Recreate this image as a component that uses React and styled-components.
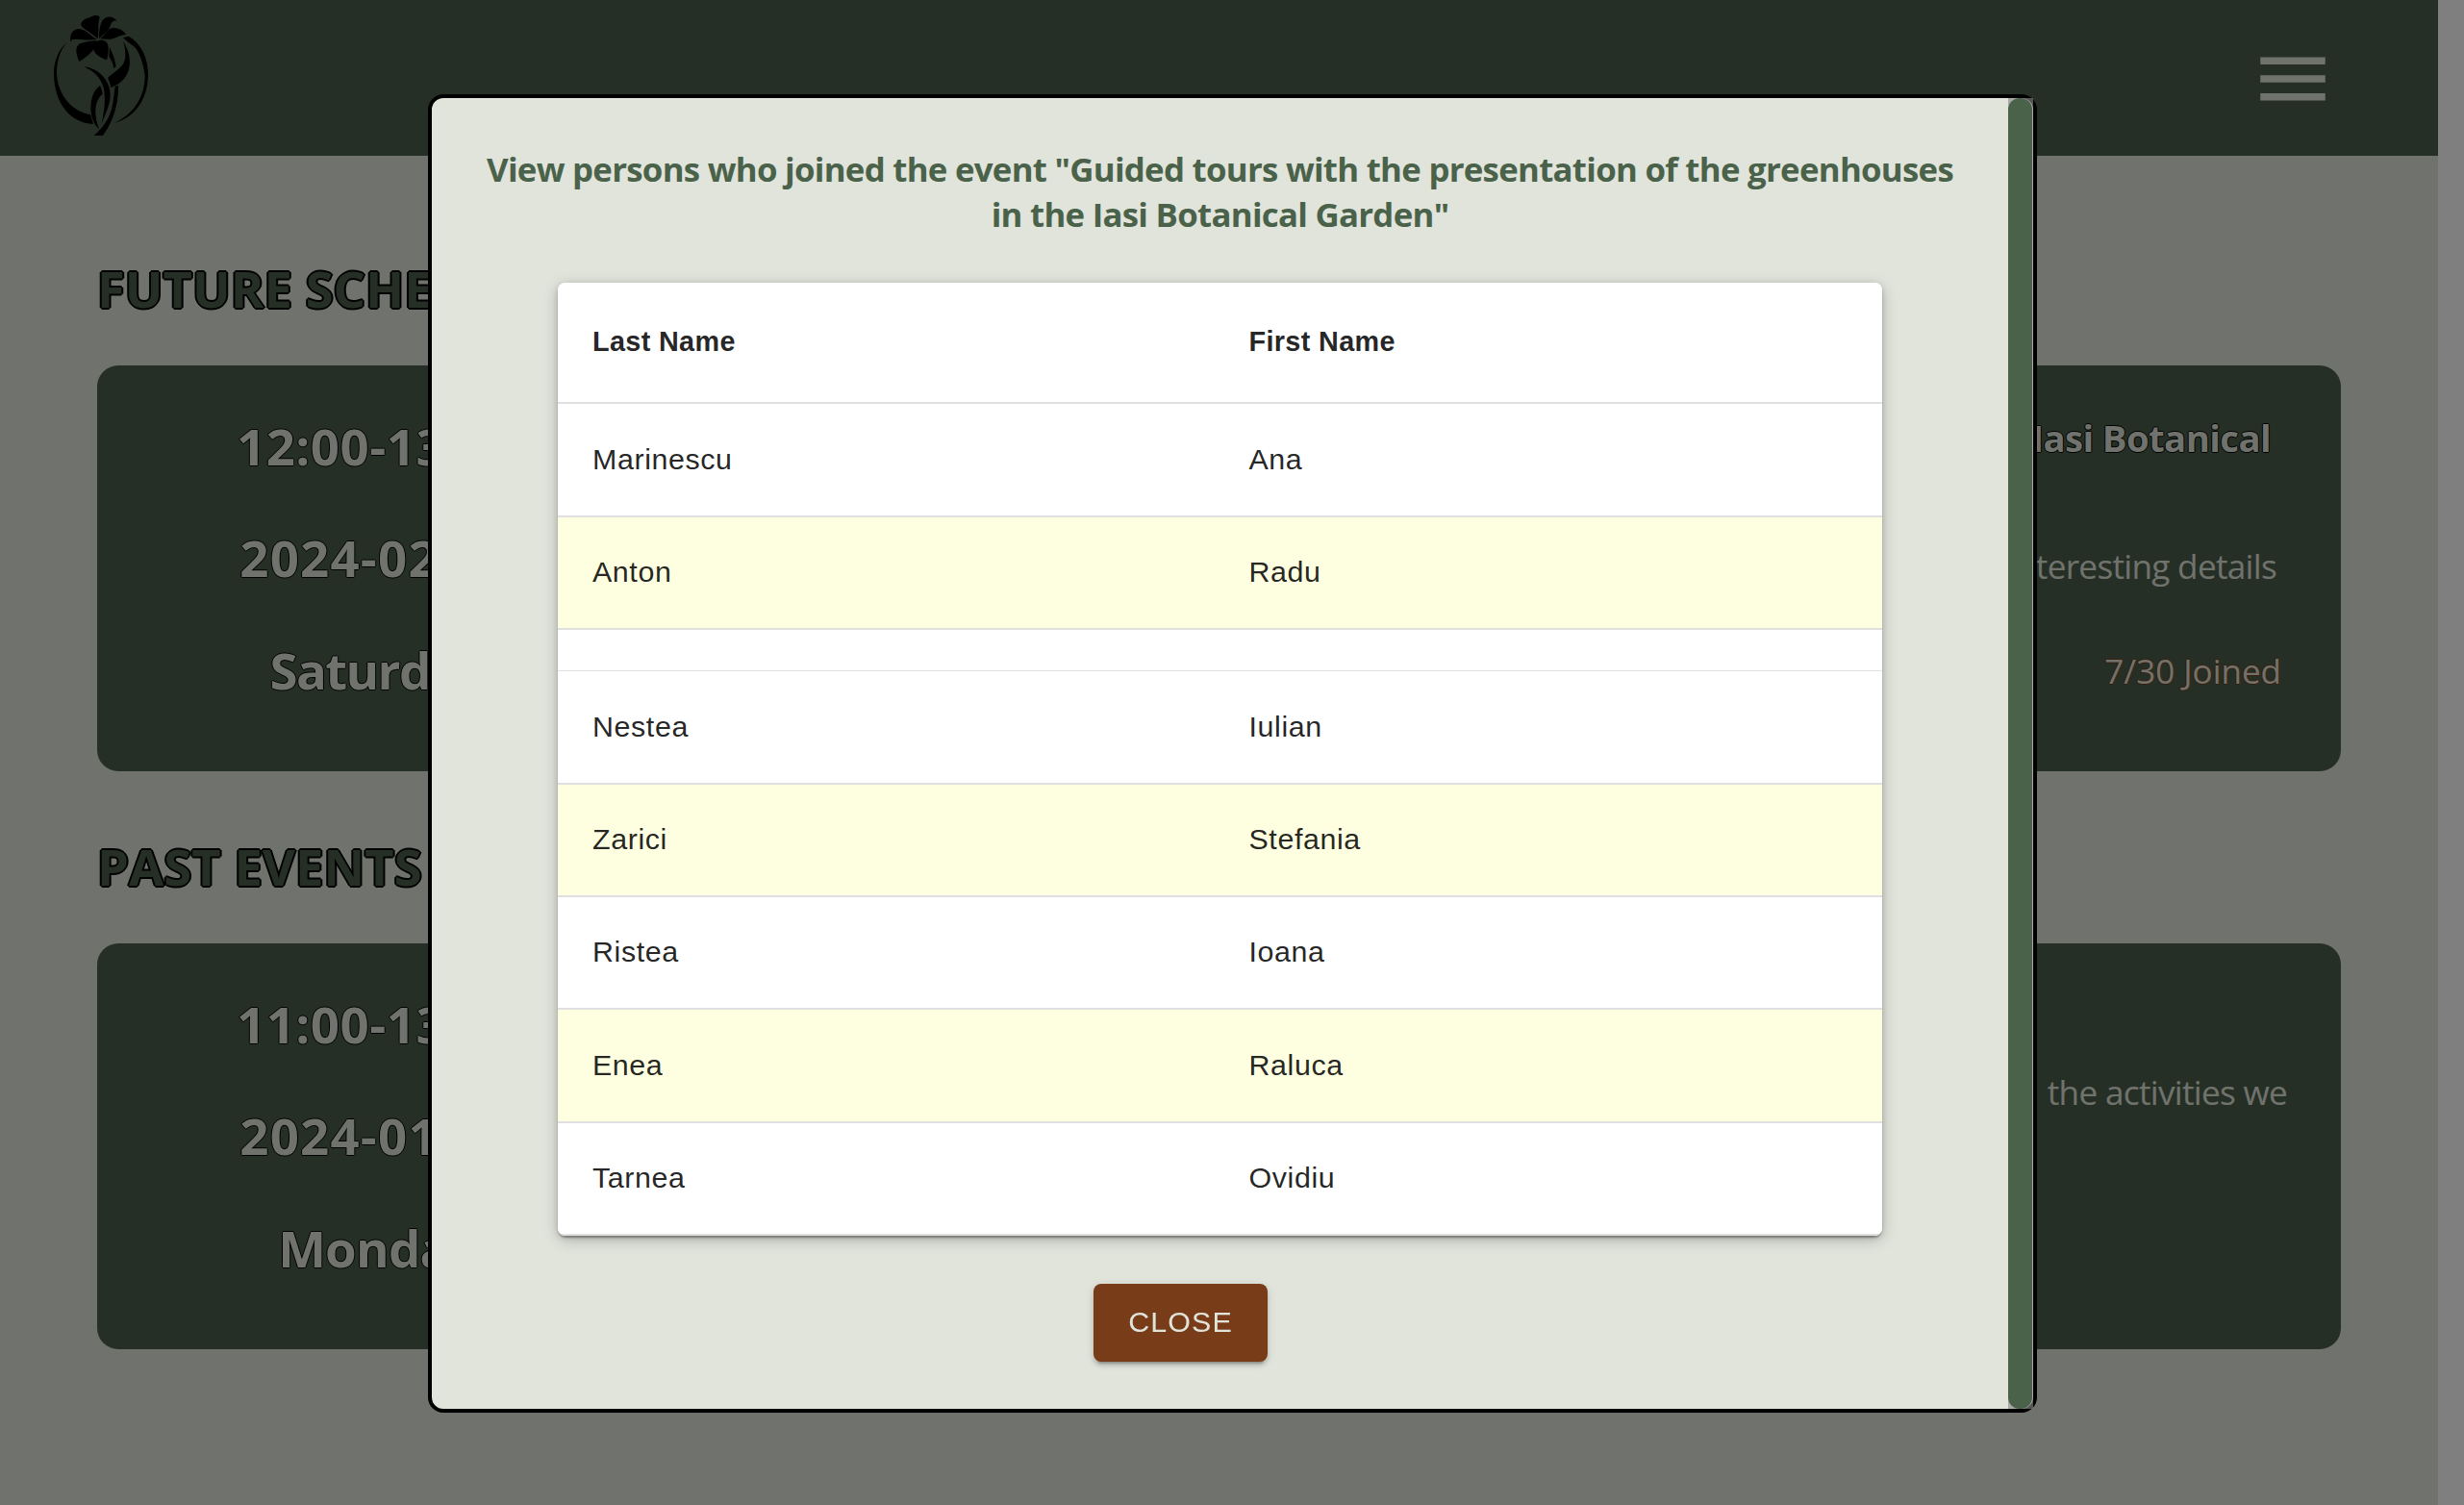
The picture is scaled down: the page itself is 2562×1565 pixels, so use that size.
import React from 'react';
import styled, { createGlobalStyle } from 'styled-components';

const UI_FONT = '"Segoe UI", "Open Sans", "Noto Sans", sans-serif';
const TABLE_FONT = 'Arial, "Liberation Sans", sans-serif';

const GlobalStyle = createGlobalStyle`
  *, *::before, *::after { box-sizing: border-box; }
  html, body { margin: 0; padding: 0; }
  body { height: 1565px; overflow: hidden; background: #e1e4db; font-family: ${UI_FONT}; }
  h1, h2, h3, p { margin: 0; }
`;

const Shell = styled.div`
  display: grid;
  grid-template-columns: 1fr 27px;
  height: 1565px;
`;

const Page = styled.div`
  background: #e1e4db;
  overflow: hidden;
`;

const ScrollGutter = styled.div`
  background: #ffffff;
`;

const Header = styled.header`
  display: flex;
  justify-content: space-between;
  height: 162px;
  padding: 0 106px 0 30px;
  background: #4a5f4a;
`;

const Logo = styled.svg`
  width: 150px;
  height: 160px;
  fill: #000;
`;

const MenuIcon = styled.svg`
  width: 90px;
  height: 90px;
  margin-top: 36.5px;
  fill: #e1e4db;
`;

const Main = styled.main`
  display: flex;
  flex-direction: column;
  gap: 63px;
  padding: 102px 101px 0;
`;

const Section = styled.section`
  display: flex;
  flex-direction: column;
  gap: 44px;
`;

const SectionTitle = styled.h2`
  font-size: 52.5px;
  line-height: 72px;
  font-weight: 700;
  letter-spacing: 0.05px;
  color: #4a5f4a;
  text-transform: uppercase;
  white-space: nowrap;
  text-shadow: -2px 0 #000, 2px 0 #000, 0 2px #000, 0 -2px #000, 1px 1px #000, -1px -1px #000, 1px -1px #000, -1px 1px #000;
`;

const EventCard = styled.article`
  display: grid;
  grid-template-columns: 584px 1fr;
  height: 422px;
  border-radius: 22px;
  background: #4a5f4a;
  color: #e1e4db;
  white-space: nowrap;
`;

const When = styled.div`
  display: flex;
  flex-direction: column;
  align-items: center;
  gap: 44.5px;
  padding-top: 47.5px;
`;

const WhenLine = styled.p`
  font-size: 52.8px;
  line-height: 72px;
  font-weight: 700;
  letter-spacing: ${(p) => p.$track}px;
  text-shadow: -1px 0 #000, 1px 0 #000, 0 1px #000, 0 -1px #000;
`;

const Details = styled.div`
  display: flex;
  flex-direction: column;
  align-items: flex-end;
  padding-top: ${(p) => p.$top}px;
`;

const EventTitle = styled.h3`
  margin: 0 73px 83px 0;
  font-size: 38.4px;
  line-height: 52px;
  font-weight: 700;
  letter-spacing: -0.65px;
  text-shadow: -1px 0 #000, 1px 0 #000, 0 1px #000, 0 -1px #000;
`;

const Description = styled.p`
  margin-right: ${(p) => p.$right}px;
  font-size: 35.2px;
  line-height: 48px;
  letter-spacing: -0.72px;
`;

const Joined = styled.p`
  margin: 61px 62px 0 0;
  font-size: 35.2px;
  line-height: 48px;
  letter-spacing: -0.1px;
  text-shadow: -1px 0 #7a3c19, 1px 0 #7a3c19, 0 1px #7a3c19, 0 -1px #7a3c19;
`;

const Backdrop = styled.div`
  position: fixed;
  inset: 0;
  display: flex;
  justify-content: center;
  align-items: flex-start;
  padding: 98px 0 0 1px;
  background: rgba(0, 0, 0, 0.5);
`;

const Dialog = styled.div`
  display: grid;
  grid-template-columns: 1fr 26px;
  width: 1673px;
  height: 1371px;
  border: 4px solid #000;
  border-radius: 16px;
  background: #e1e4db;
`;

const DialogBody = styled.div`
  display: flex;
  flex-direction: column;
  align-items: center;
  padding-top: 50px;
`;

const ScrollTrack = styled.div`
  padding-right: 1px;
  background: rgba(135, 135, 135, 0.63);
`;

const ScrollThumb = styled.div`
  height: 100%;
  border-radius: 12px;
  background: #4a624a;
`;

const DialogTitle = styled.h1`
  font-size: 34.8px;
  line-height: 47px;
  font-weight: 700;
  letter-spacing: -0.72px;
  text-align: center;
  white-space: nowrap;
  color: #4a624a;
`;

const Table = styled.div`
  display: flex;
  flex-direction: column;
  width: 1377px;
  margin-top: 48px;
  overflow: hidden;
  border-radius: 8px;
  background: #fff;
  font-family: ${TABLE_FONT};
  color: rgba(0, 0, 0, 0.87);
  box-shadow: 0 4px 2px -2px rgba(0, 0, 0, 0.2), 0 2px 2px 0 rgba(0, 0, 0, 0.14), 0 2px 6px 0 rgba(0, 0, 0, 0.12),
    0 4px 16px rgba(0, 0, 0, 0.22);
`;

const Row = styled.div`
  display: grid;
  grid-template-columns: 682.5px 1fr;
  align-items: center;
  height: ${(p) => p.$height}px;
  border-bottom: ${(p) => (p.$thin ? 1 : 2)}px solid #e0e0e0;
  background: ${(p) => (p.$tinted ? '#feffe0' : '#fff')};
`;

const HeadCell = styled.div`
  padding: 0 36px 3px;
  font-size: 28.8px;
  line-height: 48px;
  font-weight: 700;
  letter-spacing: 0.35px;
`;

const Cell = styled.div`
  padding: 0 36px 2px;
  font-size: 30.4px;
  line-height: 43px;
  letter-spacing: 0.6px;
`;

const CloseButton = styled.button`
  width: 181px;
  height: 81px;
  margin: 50px 82px 0 0;
  padding: 0 0 2px;
  border: 0;
  border-radius: 8px;
  background: #783c19;
  color: #e1e4db;
  font-family: ${TABLE_FONT};
  font-size: 30.4px;
  letter-spacing: 1.1px;
  text-transform: uppercase;
  box-shadow: 0 6px 2px -4px rgba(0, 0, 0, 0.2), 0 4px 4px 0 rgba(0, 0, 0, 0.14), 0 2px 10px 0 rgba(0, 0, 0, 0.12);
`;

const rows = [
  { height: 118, last: 'Marinescu', first: 'Ana' },
  { height: 117, last: 'Anton', first: 'Radu', tinted: true },
  { height: 43, thin: true },
  { height: 118, last: 'Nestea', first: 'Iulian' },
  { height: 117, last: 'Zarici', first: 'Stefania', tinted: true },
  { height: 117, last: 'Ristea', first: 'Ioana' },
  { height: 118, last: 'Enea', first: 'Raluca', tinted: true },
  { height: 117, last: 'Tarnea', first: 'Ovidiu' },
];

function FlowerLogo() {
  return (
    <Logo viewBox="0 0 450 480" aria-hidden="true">
      <path d="M119 131C92 155 78 192 78 228C78 320 128 384 201 387L192 357C140 350 88 300 87 225C87 190 98 155 119 131Z" />
      <path d="M294 118L311 113C350 135 372 180 372 232C372 310 330 368 266 384C325 358 362 305 362 235C358 205 345 150 318 138Z" />
      <path d="M215 121C200 105 170 90 163 80C161 66 175 58 192 54C205 45 219 47 221 55C214 75 219 100 215 121Z" />
      <path d="M219 121C218 100 222 75 230 63C245 45 265 52 275 65C262 62 258 70 254 80C248 100 232 105 219 121Z" />
      <path d="M213 123C180 128 150 118 134 124L131 132C125 110 135 92 155 90C180 92 195 115 213 123Z" />
      <path d="M222 121C240 108 240 92 262 87C285 86 297 98 303 108C290 108 275 116 262 121C248 124 235 122 222 121Z" />
      <path d="M213 127C208 150 195 170 157 192C145 165 144 145 160 136C178 130 195 128 213 127Z" />
      <path d="M219 126C232 124 244 128 247 142C250 160 246 178 243 187C222 180 203 168 201 150C203 138 210 130 219 126Z" />
      <path d="M252 147C258 160 268 180 272 208L265 213C262 195 256 185 250 177Z" />
      <path d="M294 128C308 150 315 170 315 192C315 235 290 262 256 273C254 262 250 252 246 243C268 222 300 210 301 175C301 155 298 140 294 128Z" />
      <path d="M172 208C215 212 254 250 254 295C254 330 240 350 227 386C235 345 238 320 236 295C235 258 215 228 172 208Z" />
      <path d="M222 267C226 272 228 285 230 293C214 305 207 330 208 350C209 375 215 390 219 403C205 390 192 365 193 335C194 300 205 280 222 267Z" />
      <path d="M269 270L279 266C280 310 270 370 231 423L203 423C230 398 255 370 262 320C265 300 267 285 269 270Z" />
    </Logo>
  );
}

export default function App() {
  return (
    <>
      <GlobalStyle />
      <Shell>
        <Page>
          <Header>
            <FlowerLogo />
            <MenuIcon viewBox="0 0 24 24" aria-label="Menu">
              <path d="M3 18h18v-2H3v2zm0-5h18v-2H3v2zm0-7v2h18V6H3z" />
            </MenuIcon>
          </Header>
          <Main>
            <Section>
              <SectionTitle>Future schedule</SectionTitle>
              <EventCard>
                <When>
                  <WhenLine $track={0.5}>12:00-13:00</WhenLine>
                  <WhenLine $track={1.2}>2024-02-24</WhenLine>
                  <WhenLine $track={-1.6}>Saturday</WhenLine>
                </When>
                <Details $top={49}>
                  <EventTitle>in the Iasi Botanical</EventTitle>
                  <Description $right={67}>interesting details</Description>
                  <Joined>7/30 Joined</Joined>
                </Details>
              </EventCard>
            </Section>
            <Section>
              <SectionTitle>Past events</SectionTitle>
              <EventCard>
                <When>
                  <WhenLine $track={0.5}>11:00-13:00</WhenLine>
                  <WhenLine $track={1.2}>2024-01-22</WhenLine>
                  <WhenLine $track={-0.8}>Monday</WhenLine>
                </When>
                <Details $top={130}>
                  <Description $right={56}>the activities we</Description>
                </Details>
              </EventCard>
            </Section>
          </Main>
        </Page>
        <ScrollGutter />
      </Shell>
      <Backdrop>
        <Dialog role="dialog">
          <DialogBody>
            <DialogTitle>
              View persons who joined the event "Guided tours with the presentation of the greenhouses
              <br />
              in the Iasi Botanical Garden"
            </DialogTitle>
            <Table>
              <Row $height={126}>
                <HeadCell>Last Name</HeadCell>
                <HeadCell>First Name</HeadCell>
              </Row>
              {rows.map((r, i) => (
                <Row key={i} $height={r.height} $thin={r.thin} $tinted={r.tinted}>
                  {r.last && <Cell>{r.last}</Cell>}
                  {r.first && <Cell>{r.first}</Cell>}
                </Row>
              ))}
            </Table>
            <CloseButton type="button">Close</CloseButton>
          </DialogBody>
          <ScrollTrack>
            <ScrollThumb />
          </ScrollTrack>
        </Dialog>
      </Backdrop>
    </>
  );
}
